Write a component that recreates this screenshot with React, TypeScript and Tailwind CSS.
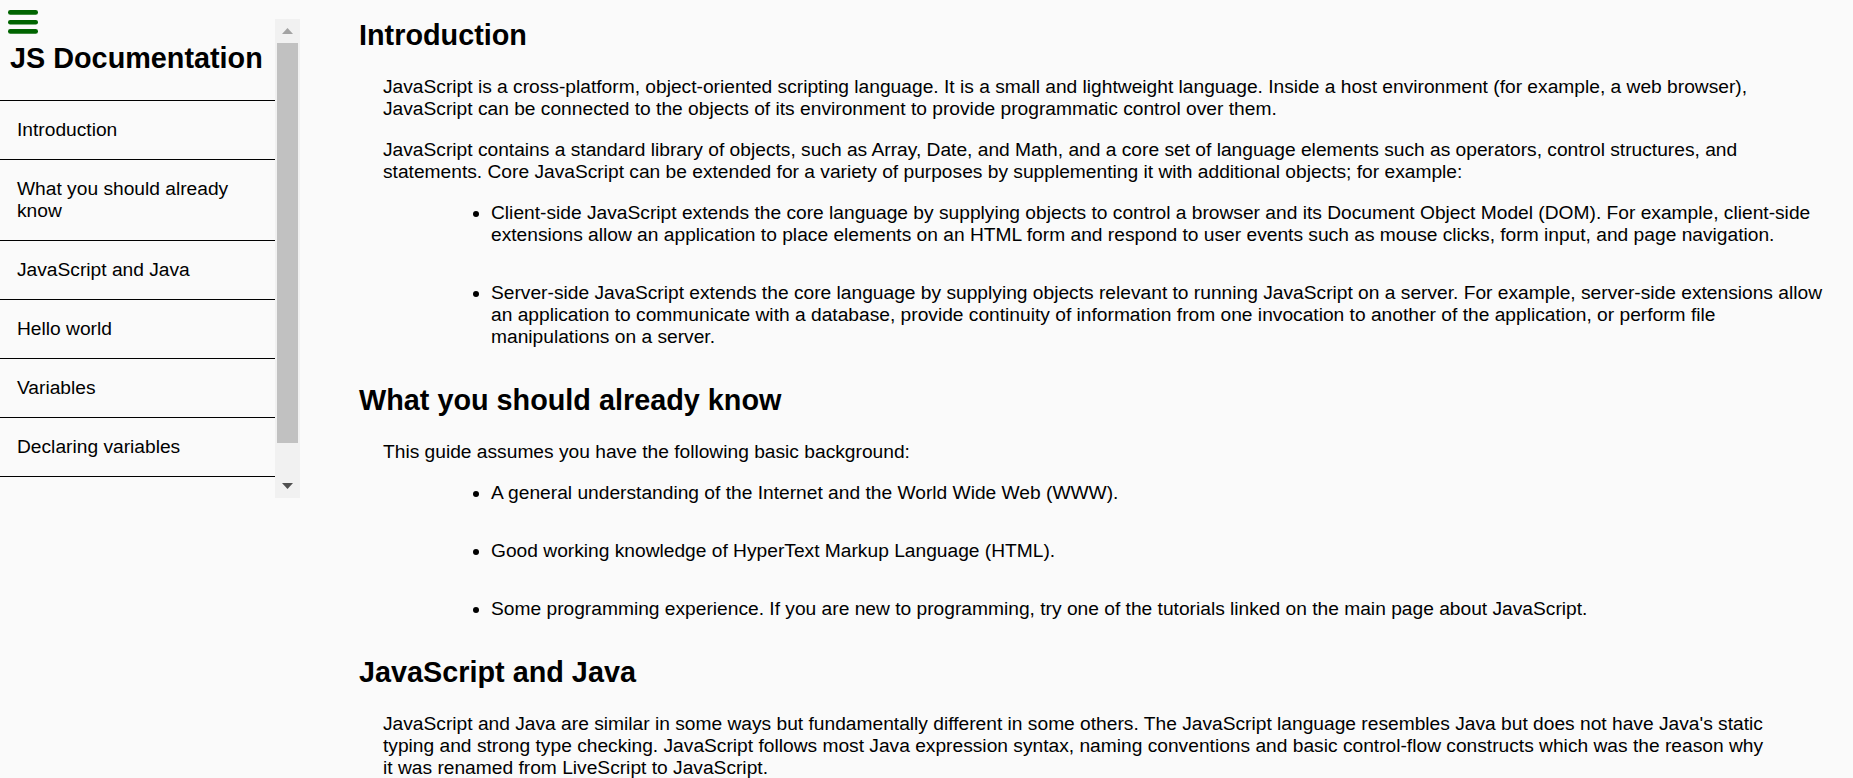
const navItems = [
  'Introduction',
  'What you should already know',
  'JavaScript and Java',
  'Hello world',
  'Variables',
  'Declaring variables',
];

export default function App() {
  return (
    <div className="relative flex h-[778px] overflow-hidden bg-[#fafafa] font-['Liberation_Sans',Arial,sans-serif] text-black">
      {/* menu toggle */}
      <button className="absolute left-[8px] top-[10px] z-10" aria-label="Menu">
        <svg width="30" height="24" viewBox="0 0 30 24" className="block">
          <rect x="0" y="0" width="30" height="4.7" rx="2.3" fill="#006400" />
          <rect x="0" y="10" width="30" height="4.5" rx="2.2" fill="#006400" />
          <rect x="0" y="19" width="30" height="4.7" rx="2.3" fill="#006400" />
        </svg>
      </button>

      {/* Sidebar */}
      <aside className="w-[300px] shrink-0 pt-[19px]">
        <div className="flex h-[479px]">
          <nav className="w-[275px] overflow-hidden">
            <header className="pl-[10px] pt-[23px] pb-[25px]">
              <h1 className="text-[28.8px] font-bold leading-[33px]">JS Documentation</h1>
            </header>
            <ul>
              {navItems.map((item) => (
                <li key={item} className="border-t border-black last:border-b">
                  <a href="#" className="block py-[18px] pl-[17px] text-[19.2px] leading-[22px]">
                    {item}
                  </a>
                </li>
              ))}
            </ul>
          </nav>
          <div className="flex w-[25px] flex-col bg-[#f1f1f1]">
            <div className="flex h-[24px] items-center justify-center">
              <svg width="11" height="6" viewBox="0 0 11 6">
                <polygon points="5.5,0 11,6 0,6" fill="#a3a3a3" />
              </svg>
            </div>
            <div className="mx-[2px] h-[400px] bg-[#c1c1c1]" />
            <div className="flex-1" />
            <div className="flex h-[24px] items-center justify-center">
              <svg width="11" height="6" viewBox="0 0 11 6">
                <polygon points="0,0 11,0 5.5,6" fill="#505050" />
              </svg>
            </div>
          </div>
        </div>
      </aside>

      {/* Main content */}
      <main className="flex flex-1 flex-col pl-[58px] pr-[18px] pt-[18.5px] text-[19.2px] leading-[22px]">
        <section className="flex flex-col">
          <h2 className="mb-[24px] pl-[1px] text-[28.8px] font-bold leading-[33px]">Introduction</h2>
          <p className="mb-[19.2px] ml-[25px] w-[1392px]">
            JavaScript is a cross-platform, object-oriented scripting language. It is a small and lightweight language. Inside a host environment (for example, a web browser), JavaScript can be connected to the objects of its environment to provide programmatic control over them.
          </p>
          <p className="mb-[19.2px] ml-[25px] w-[1392px]">
            JavaScript contains a standard library of objects, such as Array, Date, and Math, and a core set of language elements such as operators, control structures, and statements. Core JavaScript can be extended for a variety of purposes by supplementing it with additional objects; for example:
          </p>
          <ul className="list-disc pl-[133px]">
            <li className="mb-[36px]">
              Client-side JavaScript extends the core language by supplying objects to control a browser and its Document Object Model (DOM). For example, client-side extensions allow an application to place elements on an HTML form and respond to user events such as mouse clicks, form input, and page navigation.
            </li>
            <li className="mb-[36px]">
              Server-side JavaScript extends the core language by supplying objects relevant to running JavaScript on a server. For example, server-side extensions allow an application to communicate with a database, provide continuity of information from one invocation to another of the application, or perform file manipulations on a server.
            </li>
          </ul>
        </section>

        <section className="flex flex-col">
          <h2 className="mb-[24px] pl-[1px] text-[28.8px] font-bold leading-[33px]">What you should already know</h2>
          <p className="mb-[19.2px] ml-[25px] w-[1392px]">This guide assumes you have the following basic background:</p>
          <ul className="list-disc pl-[133px]">
            <li className="mb-[36px]">A general understanding of the Internet and the World Wide Web (WWW).</li>
            <li className="mb-[36px]">Good working knowledge of HyperText Markup Language (HTML).</li>
            <li className="mb-[36px]">
              Some programming experience. If you are new to programming, try one of the tutorials linked on the main page about JavaScript.
            </li>
          </ul>
        </section>

        <section className="flex flex-col">
          <h2 className="mb-[24px] pl-[1px] text-[28.8px] font-bold leading-[33px]">JavaScript and Java</h2>
          <p className="ml-[25px] w-[1392px]">
            JavaScript and Java are similar in some ways but fundamentally different in some others. The JavaScript language resembles Java but does not have Java's static typing and strong type checking. JavaScript follows most Java expression syntax, naming conventions and basic control-flow constructs which was the reason why it was renamed from LiveScript to JavaScript.
          </p>
        </section>
      </main>
    </div>
  );
}
